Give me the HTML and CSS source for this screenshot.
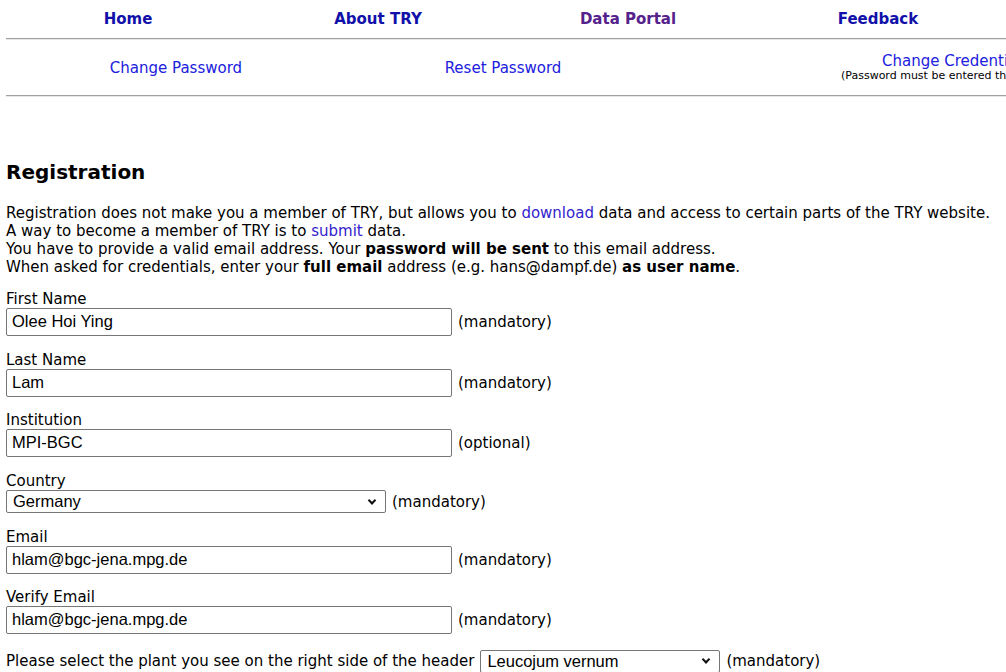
FILE: index.html
```html
<!DOCTYPE html>
<html lang="en">
<head>
<meta charset="utf-8">
<title>TRY Registration</title>
<link rel="stylesheet" href="styles.css">
</head>
<body>
<nav class="topnav">
  <a class="nav-link" href="#">Home</a>
  <a class="nav-link" href="#">About TRY</a>
  <a class="nav-link visited" href="#">Data Portal</a>
  <a class="nav-link" href="#">Feedback</a>
</nav>
<div class="rule"></div>
<div class="subnav">
  <div class="sub-cell"><a class="sub-link" href="#">Change Password</a></div>
  <div class="sub-cell"><a class="sub-link" href="#">Reset Password</a></div>
  <div class="sub-cell cred">
    <a class="sub-link cred-link" href="#">Change Credentials</a>
    <span class="note">(Password must be entered through the login dialog)</span>
  </div>
</div>
<div class="rule"></div>
<main class="content">
  <h2 class="title">Registration</h2>
  <p class="intro">Registration does not make you a member of TRY, but allows you to <a class="text-link" href="#">download</a> data and access to certain parts of the TRY website.<br>
  A way to become a member of TRY is to <a class="text-link" href="#">submit</a> data.<br>
  You have to provide a valid email address. Your <b>password will be sent</b> to this email address.<br>
  When asked for credentials, enter your <b>full email</b> address (e.g. hans@dampf.de) <b>as user name</b>.</p>
  <form class="reg-form">
    <div class="field">
      <label class="field-label">First Name</label>
      <div class="field-row"><input class="text-input" type="text" value="Olee Hoi Ying"><span class="hint">(mandatory)</span></div>
    </div>
    <div class="field">
      <label class="field-label">Last Name</label>
      <div class="field-row"><input class="text-input" type="text" value="Lam"><span class="hint">(mandatory)</span></div>
    </div>
    <div class="field">
      <label class="field-label">Institution</label>
      <div class="field-row"><input class="text-input" type="text" value="MPI-BGC"><span class="hint">(optional)</span></div>
    </div>
    <div class="field">
      <label class="field-label">Country</label>
      <div class="field-row"><span class="select-wrap"><select class="select country"><option>Germany</option></select></span><span class="hint">(mandatory)</span></div>
    </div>
    <div class="field">
      <label class="field-label">Email</label>
      <div class="field-row"><input class="text-input" type="text" value="hlam@bgc-jena.mpg.de"><span class="hint">(mandatory)</span></div>
    </div>
    <div class="field">
      <label class="field-label">Verify Email</label>
      <div class="field-row"><input class="text-input" type="text" value="hlam@bgc-jena.mpg.de"><span class="hint">(mandatory)</span></div>
    </div>
    <div class="field-row plant-row">
      <span class="plant-label">Please select the plant you see on the right side of the header</span>
      <span class="select-wrap"><select class="select plant"><option>Leucojum vernum</option></select></span><span class="hint">(mandatory)</span>
    </div>
  </form>
</main>
</body>
</html>
```

FILE: styles.css
```css
html {
  overflow: hidden;
}
body {
  margin: 0;
  font-family: "DejaVu Sans", Verdana, sans-serif;
  font-size: 15px;
  color: #000;
  background: #fff;
}
.topnav {
  display: grid;
  grid-template-columns: repeat(4, 250px);
  margin-left: 3px;
  height: 38px;
  align-items: center;
  text-align: center;
}
.nav-link {
  font-weight: bold;
  color: #1111aa;
  text-decoration: none;
}
.nav-link.visited {
  color: #55228c;
}
.rule {
  margin-left: 6px;
  width: 1100px;
  height: 0;
  border-top: 1px solid #a0a0a0;
  border-bottom: 1px solid #e8e8e8;
}
.subnav {
  display: grid;
  grid-template-columns: 340px 314px 500px;
  margin-left: 6px;
  height: 55px;
  align-items: center;
  text-align: center;
}
.sub-link {
  color: #2020dd;
  text-decoration: none;
}
.sub-cell.cred {
  display: flex;
  flex-direction: column;
  align-items: flex-start;
  padding-left: 181px;
  padding-top: 0;
  white-space: nowrap;
  line-height: 16px;
}
.cred-link {
  margin-left: 41px;
}
.note {
  font-size: 11px;
  line-height: 13px;
}
.content {
  padding: 0 6px;
}
.title {
  margin: 63px 0 0;
  font-size: 20px;
  line-height: 24px;
  font-weight: bold;
}
.intro {
  margin: 20px 0 0;
  line-height: 18px;
  white-space: nowrap;
}
.text-link {
  color: #3322cc;
  text-decoration: none;
}
.reg-form {
  margin-top: 15px;
}
.field {
  margin-bottom: 15.7px;
}
.field-label {
  display: block;
  line-height: 17px;
}
.field-row {
  display: flex;
  align-items: center;
  gap: 6px;
}
.text-input {
  box-sizing: border-box;
  width: 446px;
  height: 28px;
  margin: 0;
  padding: 0 5px 1px;
  border: 1px solid #767676;
  border-radius: 2px;
  font-family: "Liberation Sans", Arial, sans-serif;
  font-size: 16.5px;
  color: #000;
}
.select-wrap {
  position: relative;
  display: inline-flex;
}
.select-wrap::after {
  content: "";
  position: absolute;
  right: 11px;
  top: 50%;
  width: 4px;
  height: 4px;
  border-right: 2px solid #111;
  border-bottom: 2px solid #111;
  transform: translateY(-75%) rotate(45deg);
  pointer-events: none;
}
.select {
  -webkit-appearance: none;
  appearance: none;
  box-sizing: border-box;
  height: 23px;
  margin: 0;
  padding: 0 24px 1px 6px;
  border: 1px solid #767676;
  border-radius: 2px;
  font-family: "Liberation Sans", Arial, sans-serif;
  font-size: 16.5px;
  line-height: 20px;
  color: #000;
  background: #fff;
}
.select.country {
  width: 380px;
}
.select.plant {
  width: 240px;
}
.hint {
  white-space: nowrap;
}
.plant-row {
  margin-top: -0.5px;
}
.plant-label {
  white-space: nowrap;
}
```
